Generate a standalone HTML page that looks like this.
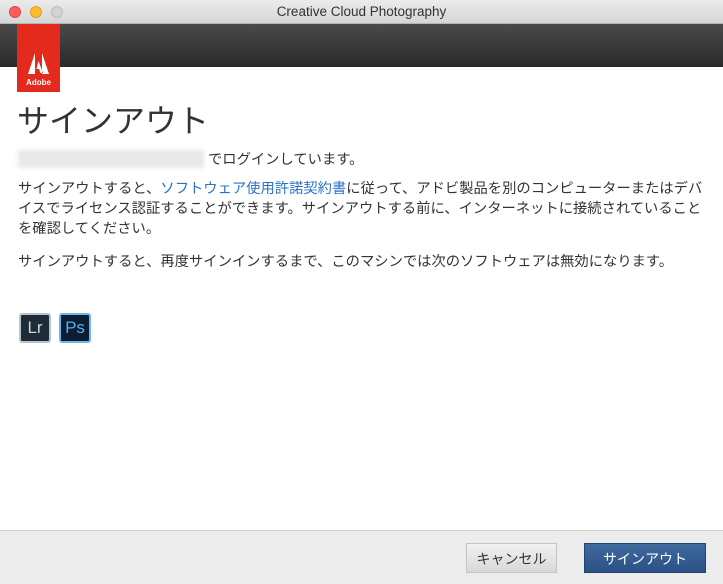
<!DOCTYPE html>
<html><head><meta charset="utf-8"><style>
*{margin:0;padding:0;box-sizing:border-box}
body{width:723px;height:584px;overflow:hidden;background:#fff;font-family:"Liberation Sans","Noto Sans CJK JP",sans-serif;color:#333;position:relative}
.tb{position:absolute;left:0;top:0;width:723px;height:24px;background:linear-gradient(#ebebeb,#d6d6d6);border-bottom:1px solid #b5b5b5;text-align:center;font-size:13.5px;line-height:24px;color:#333}
.dot{position:absolute;top:6px;width:12px;height:12px;border-radius:50%}
.dark{position:absolute;left:0;top:24px;width:723px;height:43px;background:linear-gradient(#4a4a4a,#2a2a2a)}
.logo{position:absolute;left:17px;top:24px;width:43px;height:68px;background:#e42a1d;color:#fff;text-align:center}
.t{position:absolute;left:18px;white-space:nowrap;font-size:14.3px;line-height:20px}
h1{position:absolute;left:17px;top:101px;font-size:32px;font-weight:normal;color:#333;line-height:40px}
.ic{position:absolute;top:313px;width:32px;height:30px;border-radius:3px;font-size:17px;line-height:26px;text-align:center;font-family:"Liberation Sans",sans-serif}
.foot{position:absolute;left:0;top:530px;width:723px;height:54px;background:#ececec;border-top:1px solid #d0d0d0}
.btn{position:absolute;top:543px;height:30px;font-size:14px;line-height:30px;text-align:center}
</style></head><body>
<div class="tb">Creative Cloud Photography</div>
<div class="dot" style="left:9px;background:#fc5f57;border:1px solid #df4744"></div>
<div class="dot" style="left:30px;background:#fdbc2e;border:1px solid #dea123"></div>
<div class="dot" style="left:51px;background:#d3d3d3;border:1px solid #bcbcbc"></div>
<div class="dark"></div>
<div class="logo"><svg width="43" height="52" viewBox="0 0 43 52"><path d="M11 50L18 29V50Z M32 50L25 29V50Z M21.5 37L26 49H23.5L22 45H19.5Z" fill="#fff"/></svg><div style="font-size:8px;font-weight:bold;margin-top:-3px">Adobe</div></div>
<h1>サインアウト</h1>
<div class="t" style="top:150px;left:18px;width:186px;height:18px;background:#e8e8e8;filter:blur(2px)"></div>
<div class="t" style="top:150px;left:208px">でログインしています。</div>
<div class="t" style="top:179px">サインアウトすると、<span style="color:#2a72c9">ソフトウェア使用許諾契約書</span>に従って、アドビ製品を別のコンピューターまたはデバ</div>
<div class="t" style="top:199px">イスでライセンス認証することができます。サインアウトする前に、インターネットに接続されていること</div>
<div class="t" style="top:219px">を確認してください。</div>
<div class="t" style="top:252px">サインアウトすると、再度サインインするまで、このマシンでは次のソフトウェアは無効になります。</div>
<div class="ic" style="left:19px;background:#1f2b36;color:#c8d5e0;border:2px solid #b7c3cf">Lr</div>
<div class="ic" style="left:59px;background:#0c1d33;color:#4fb2f0;border:2px solid #6fb7e6">Ps</div>
<div class="foot"></div>
<div class="btn" style="left:466px;width:91px;background:linear-gradient(#f1f1f1,#d9d9d9);border:1px solid #c4c4c4;color:#333">キャンセル</div>
<div class="btn" style="left:584px;width:122px;background:linear-gradient(#3f6a9e,#2b5185);border:1px solid #244570;color:#fff">サインアウト</div>
</body></html>
